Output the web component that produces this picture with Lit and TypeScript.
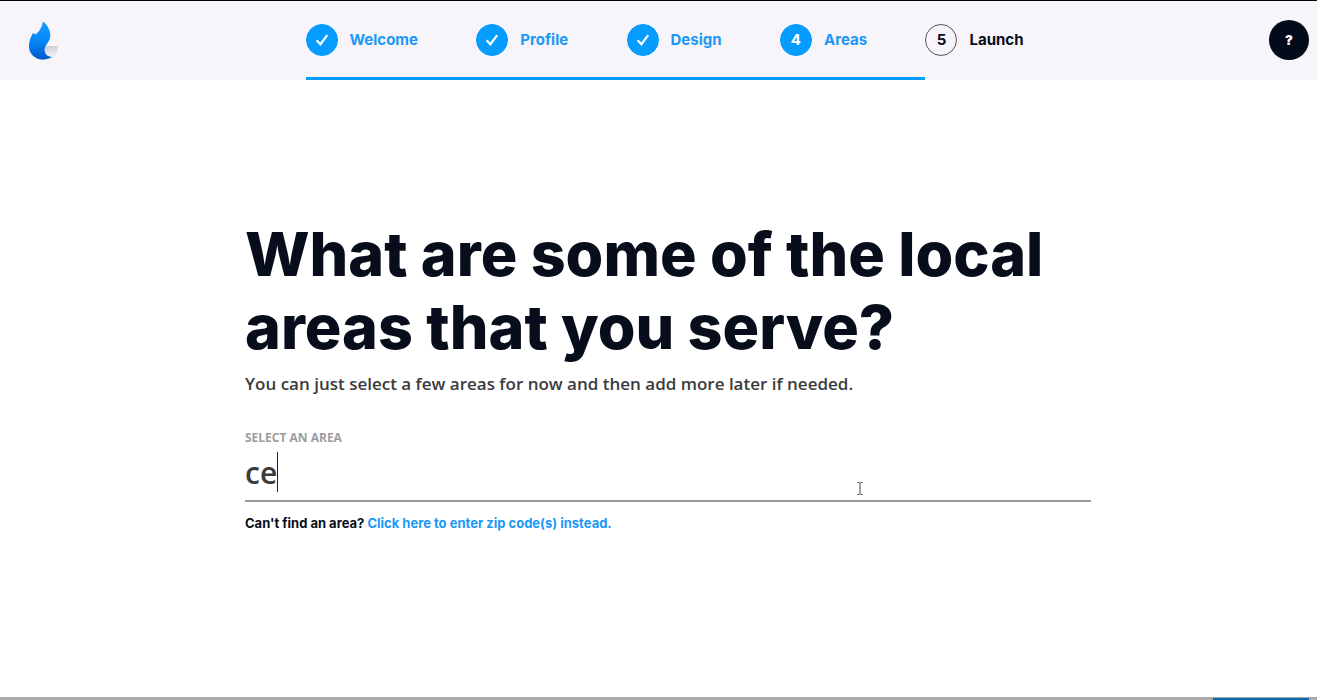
import { LitElement, html, css } from "lit";
import { customElement, property, state } from "lit/decorators.js";
import { classMap } from "lit/directives/class-map.js";

type Step = { label: string; status: "done" | "current" | "todo" };

@customElement("step-nav")
class StepNav extends LitElement {
  @property({ attribute: false }) steps: Step[] = [];
  @property({ type: Number }) progress = 0;

  static styles = css`
    :host {
      display: flex;
      flex-direction: column;
      height: 100%;
    }
    .list {
      flex: 1;
      display: flex;
      align-items: center;
      justify-content: space-between;
      list-style: none;
      margin: 0;
      padding: 2px 0 0;
    }
    .step {
      display: flex;
      align-items: center;
      gap: 12px;
      color: #070d1b;
      font: 700 15px/20px Inter, sans-serif;
      text-decoration: none;
    }
    .active {
      color: #1b98f7;
    }
    .dot {
      box-sizing: border-box;
      width: 32px;
      height: 32px;
      border: 1px solid #55555c;
      border-radius: 50%;
      display: grid;
      place-items: center;
    }
    .active .dot {
      background: #059cff;
      border-color: #059cff;
      color: #fff;
    }
    .track {
      height: 3px;
    }
    .fill {
      height: 100%;
      background: #059cff;
    }
  `;

  render() {
    return html`
      <ol class="list">
        ${this.steps.map(
          (s, i) => html`<li>
            <a
              href="#"
              class=${classMap({ step: true, active: s.status !== "todo" })}
              aria-current=${s.status === "current" ? "step" : "false"}
            >
              <span class="dot"
                >${s.status === "done"
                  ? html`<svg width="14" height="12" viewBox="0 0 14 12" aria-hidden="true">
                      <path d="M1.6 6.2 5.4 10.2 12.2 1.2" fill="none" stroke="#fff" stroke-width="2.2" />
                    </svg>`
                  : i + 1}</span
              >
              ${s.label}
            </a>
          </li>`
        )}
      </ol>
      <div class="track"><div class="fill" style="width:${this.progress}%"></div></div>
    `;
  }
}

@customElement("app-root")
class AppRoot extends LitElement {
  @state() private area = "ce";

  private steps: Step[] = [
    { label: "Welcome", status: "done" },
    { label: "Profile", status: "done" },
    { label: "Design", status: "done" },
    { label: "Areas", status: "current" },
    { label: "Launch", status: "todo" },
  ];

  static styles = css`
    :host {
      display: flex;
      flex-direction: column;
      min-height: 100vh;
      background: #fff;
      color: #070d1b;
      font-family: "Open Sans", sans-serif;
    }
    .header {
      box-sizing: border-box;
      height: 80px;
      border-top: 1px solid #000;
      background: #f7f5f9;
      display: grid;
      grid-template-columns: 1fr minmax(0, 718px) 1fr;
    }
    .logo {
      align-self: center;
      margin: 0 0 2px 28px;
      height: 40px;
      width: 32px;
    }
    .nav {
      margin: 0 -6px 0 6px;
    }
    .help {
      align-self: center;
      justify-self: end;
      margin: 0 8px 2px 0;
      width: 40px;
      height: 40px;
      padding: 0;
      border: 0;
      border-radius: 50%;
      background: #030a1a;
      color: #fff;
      font: 900 13px/20px Inter, sans-serif;
    }
    .main {
      flex: 1;
      display: flex;
      flex-direction: column;
      justify-content: center;
      padding: 0 226px 26px 245px;
    }
    .title {
      margin: 0;
      font: 800 61px/73px Inter, sans-serif;
    }
    .lead {
      margin: 8px 0 0;
      font-size: 17px;
      line-height: 24px;
      font-weight: 600;
      color: #3b3b3d;
    }
    .label {
      margin-top: 34px;
      font-size: 12px;
      line-height: 16px;
      font-weight: 700;
      color: #9c9c9e;
    }
    .field {
      position: relative;
      display: flex;
      border-bottom: 2px solid #989898;
    }
    .input {
      flex: 1;
      min-width: 0;
      height: 52px;
      padding: 0 0 2px;
      border: 0;
      outline: 0;
      background: transparent;
      color: #3b3b3d;
      font: 600 30px/40px "Open Sans", sans-serif;
      caret-color: transparent;
    }
    .mirror {
      position: absolute;
      left: 0;
      top: 6px;
      height: 40px;
      border-right: 1px solid #222;
      color: transparent;
      font: 600 30px/40px "Open Sans", sans-serif;
      white-space: pre;
      pointer-events: none;
    }
    .pointer {
      position: absolute;
      left: 72%;
      top: 36px;
      margin-left: 2px;
      pointer-events: none;
    }
    .hint {
      margin: 11px 0 0;
      font: 700 13px/20px Inter, sans-serif;
    }
    .link {
      color: #1b98f7;
      text-decoration: none;
    }
    .footer {
      height: 3px;
      background: #a9a9a9;
      display: flex;
      justify-content: flex-end;
      padding-right: 8px;
      overflow: hidden;
    }
    .next {
      width: 96px;
      height: 40px;
      padding: 0;
      margin-top: 1px;
      border: 0;
      background: #0c69ae;
    }
  `;

  private onInput(e: Event) {
    this.area = (e.target as HTMLInputElement).value;
  }

  render() {
    return html`
      <header class="header">
        <svg class="logo" viewBox="0 0 32 40" role="img" aria-label="Home">
          <defs>
            <linearGradient id="flame" x1="0" y1="0" x2="0" y2="1">
              <stop offset="0" stop-color="#119cff" />
              <stop offset=".5" stop-color="#0788fa" />
              <stop offset="1" stop-color="#0059c9" />
            </linearGradient>
            <linearGradient id="ash" x1="0" y1="0" x2="0" y2="1">
              <stop offset="0" stop-color="#cfd0d2" />
              <stop offset="1" stop-color="#f0f0f1" />
            </linearGradient>
          </defs>
          <path
            d="M15 1.6C19.8 5.5 23.4 11.5 22 18 21 22.3 16.6 25.4 16.8 30.4 17 34.4 20.5 37 24.7 36.6 21.5 39 17.5 39.8 14 39.6 6.5 39.2 1 33.5 1 26.5 1 20.5 2.8 17.2 5 13 6 13.6 6.8 14 7.6 14.6 11.4 11.5 14.2 7.5 15 1.6Z"
            fill="url(#flame)"
          />
          <path
            d="M17.8 26H29.8C29.6 31.5 27.5 35.5 24.7 36.6 20.5 37 17 34.4 16.8 30.4 16.7 28.8 17 27.2 17.8 26Z"
            fill="url(#ash)"
          />
        </svg>
        <nav class="nav" aria-label="Setup steps">
          <step-nav .steps=${this.steps} .progress=${86.3}></step-nav>
        </nav>
        <button class="help" aria-label="Help">?</button>
      </header>
      <main class="main">
        <h1 class="title">What are some of the local areas that you serve?</h1>
        <p class="lead">You can just select a few areas for now and then add more later if needed.</p>
        <label class="label" for="area">SELECT AN AREA</label>
        <div class="field">
          <input id="area" class="input" type="text" autocomplete="off" .value=${this.area} @input=${this.onInput} />
          <span class="mirror" aria-hidden="true">${this.area}</span>
          <svg class="pointer" width="8" height="13" viewBox="0 0 8 13" aria-hidden="true">
            <path d="M1.5 .5H3.5M4.5 .5H6.5M4 1V12M1.5 12.5H3.5M4.5 12.5H6.5" fill="none" stroke="#444" />
          </svg>
        </div>
        <p class="hint">Can't find an area? <a class="link" href="#">Click here to enter zip code(s) instead.</a></p>
      </main>
      <footer class="footer"><button class="next" aria-label="Next"></button></footer>
    `;
  }
}
